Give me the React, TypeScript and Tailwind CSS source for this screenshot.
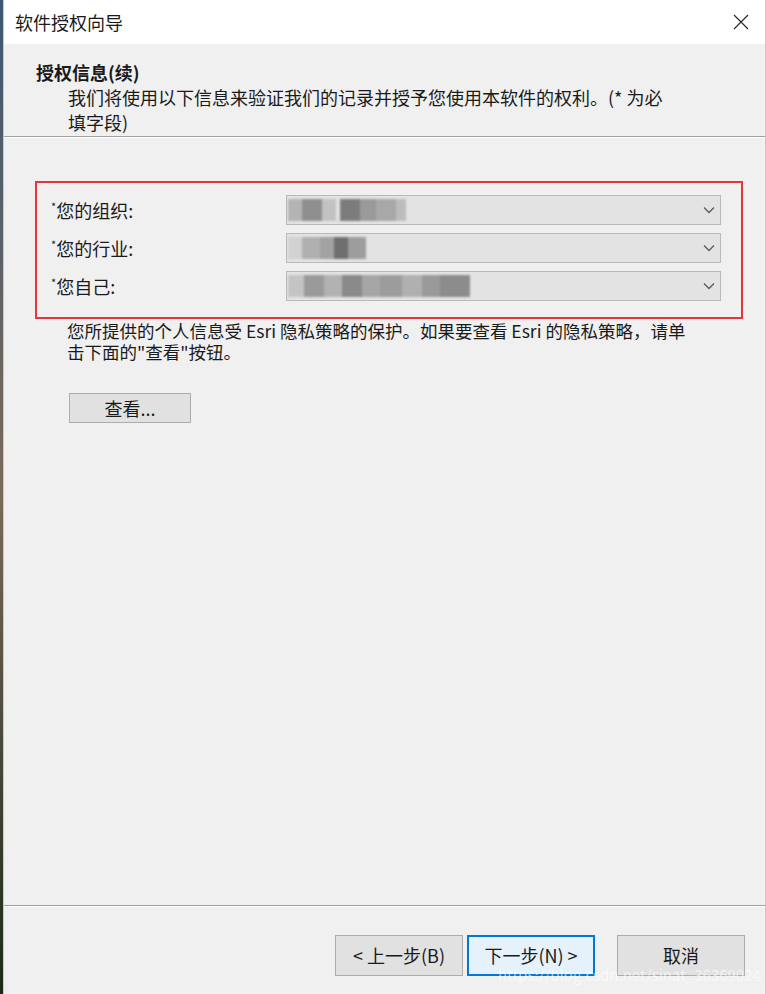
import React from "react";

const FONT = '"Noto Sans CJK SC", "Noto Sans", sans-serif';

const FIELDS = [
  { label: "您的组织:", blocks: [[0, 14, "#b4b4b4"], [14, 20, "#8f8f8f"], [34, 14, "#c2c2c2"], [52, 20, "#7c7c7c"], [72, 16, "#9a9a9a"], [88, 20, "#a8a8a8"], [108, 10, "#bcbcbc"]] },
  { label: "您的行业:", blocks: [[0, 14, "#d2d2d2"], [14, 18, "#b0b0b0"], [32, 14, "#a2a2a2"], [46, 14, "#6f6f6f"], [60, 18, "#9d9d9d"]] },
  { label: "您自己:", blocks: [[0, 16, "#c4c4c4"], [16, 20, "#9a9a9a"], [36, 18, "#b2b2b2"], [54, 20, "#8a8a8a"], [74, 18, "#a6a6a6"], [92, 22, "#9c9c9c"], [114, 20, "#b0b0b0"], [134, 18, "#9a9a9a"], [152, 30, "#8c8c8c"]] },
] as const;

function Chevron() {
  return (
    <svg width="12" height="8" viewBox="0 0 12 8" fill="none">
      <path d="M1 1.5 L6 6.5 L11 1.5" stroke="#5a5a5a" strokeWidth="1.3" />
    </svg>
  );
}

function Combo({ blocks }: { blocks: readonly (readonly [number, number, string])[] }) {
  return (
    <div className="relative flex h-[30px] w-[435px] items-center justify-end border border-[#b9b9b9] bg-[#e3e3e3] pr-[5px]">
      <div className="absolute left-[1px] top-[3px] h-[22px] blur-[1px]">
        {blocks.map(([x, w, c], i) => (
          <div
            key={i}
            className="absolute top-0 h-[22px]"
            style={{ left: x, width: w, background: c }}
          />
        ))}
      </div>
      <Chevron />
    </div>
  );
}

export default function App() {
  return (
    <div
      className="flex h-[994px] w-[766px] overflow-hidden text-[#1a1a1a]"
      style={{ fontFamily: FONT }}
    >
      <div className="w-[3px] bg-gradient-to-b from-[#3d5773] via-[#7a6a58] to-[#1c2a1a]" />
      <div className="relative flex flex-1 flex-col border-x border-[#c9c9c9] bg-[#f0f0f0]">
        {/* title bar */}
        <div className="flex h-[44px] items-center justify-between bg-white pl-[11px] pr-[16px]">
          <span className="text-[18px] leading-none">软件授权向导</span>
          <svg width="16" height="16" viewBox="0 0 16 16" fill="none">
            <path d="M1 1 L15 15 M15 1 L1 15" stroke="#222" strokeWidth="1.1" />
          </svg>
        </div>

        {/* header */}
        <div className="h-[92px] pt-[15px]">
          <div className="pl-[32px] text-[18px] font-bold leading-[26px]">授权信息(续)</div>
          <div className="pl-[64px] text-[18px] leading-[25px]">
            我们将使用以下信息来验证我们的记录并授予您使用本软件的权利。(* 为必
            <br />
            填字段)
          </div>
        </div>
        <div className="h-px bg-[#a0a0a0]" />
        <div className="h-px bg-white" />

        {/* content */}
        <div className="flex-1 pt-[43px]">
          <div className="ml-[31px] flex w-[708px] flex-col gap-[8px] border-2 border-[#e5363b] pb-[16px] pl-[14px] pt-[12px]">
            {FIELDS.map((f) => (
              <div key={f.label} className="flex items-center">
                <div className="w-[235px] text-[18px] leading-none">
                  <span className="align-top text-[11px]">*</span>
                  {f.label}
                </div>
                <Combo blocks={f.blocks} />
              </div>
            ))}
          </div>
          <div className="ml-[63px] mt-[1px] text-[17.5px] leading-[21px]">
            <div>您所提供的个人信息受 Esri 隐私策略的保护。如果要查看 Esri 的隐私策略，请单</div>
            <div>击下面的"查看"按钮。</div>
          </div>
          <button className="ml-[65px] mt-[31px] flex h-[30px] w-[122px] items-center justify-center border border-[#adadad] bg-[#e1e1e1] text-[18px]">
            查看...
          </button>
        </div>

        {/* footer */}
        <div className="h-px bg-[#a0a0a0]" />
        <div className="h-px bg-white" />
        <div className="flex h-[87px] items-start pl-[331px] pt-[28px]">
          <button className="flex h-[41px] w-[128px] items-center justify-center border border-[#adadad] bg-[#e1e1e1] text-[18px]">
            &lt; 上一步(B)
          </button>
          <button className="ml-[4px] flex h-[41px] w-[128px] items-center justify-center border-2 border-[#0078d7] bg-[#e5f1fb] text-[18px]">
            下一步(N) &gt;
          </button>
          <button className="ml-[22px] flex h-[41px] w-[128px] items-center justify-center border border-[#adadad] bg-[#e1e1e1] text-[18px]">
            取消
          </button>
        </div>

        <div className="pointer-events-none absolute bottom-[12px] left-[494px] text-[15px] leading-none text-white/60">
          https://blog.csdn.net/sinat_36369024
        </div>
      </div>
    </div>
  );
}
